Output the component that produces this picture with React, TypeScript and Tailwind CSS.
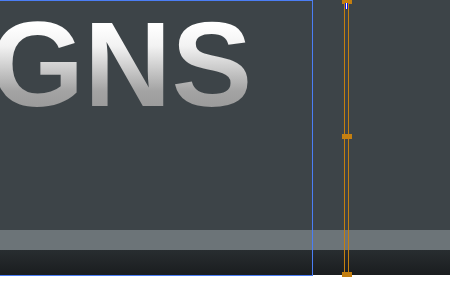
import React from 'react';

const Handle = ({ h }: { h: string }) => <div className={`w-[10px] bg-[#c47f10] ${h}`} />;

export default function App() {
  return (
    <div className="relative w-[450px] h-[284px] overflow-hidden bg-white">
      {/* canvas */}
      <div className="flex h-[275px] flex-col">
        <div className="flex-1 bg-[#3d4448] pt-[4px]">
          <h1
            className="ml-[-10px] whitespace-nowrap bg-[linear-gradient(to_bottom,#ffffff_18%,#f2f2f2_35%,#a3a3a3_72%,#9a9a9a_88%)] bg-clip-text text-[121px] font-bold leading-none text-transparent"
            style={{ fontFamily: '"Liberation Sans", Arial, sans-serif' }}
          >
            GNS
          </h1>
        </div>
        <div className="h-[20px] bg-[#6c7478]" />
        <div className="h-[25px] bg-[linear-gradient(to_bottom,#282d30,#1a1d1f)]" />
      </div>

      {/* selection frame */}
      <div className="absolute left-[-2px] top-0 h-[276px] w-[315px] border border-[#4b7ef5]" />

      {/* guide */}
      <div className="absolute left-[342px] top-0 flex h-[277px] w-[10px] flex-col">
        <Handle h="h-[4px]" />
        <div className="flex h-[130px] pl-[2px]">
          <div className="w-px bg-[#c47f10]" />
          <div className="flex w-[3px] flex-col">
            <div className="mt-[-1px] flex h-[6px] w-[3px] bg-[#0a14e0]">
              <div className="ml-[1px] w-px bg-white" />
            </div>
          </div>
          <div className="w-px bg-[#c47f10]" />
        </div>
        <Handle h="h-[5px]" />
        <div className="flex flex-1 gap-[3px] pl-[2px]">
          <div className="w-px bg-[#c47f10]" />
          <div className="w-px bg-[#c47f10]" />
        </div>
        <Handle h="h-[5px]" />
      </div>
    </div>
  );
}
